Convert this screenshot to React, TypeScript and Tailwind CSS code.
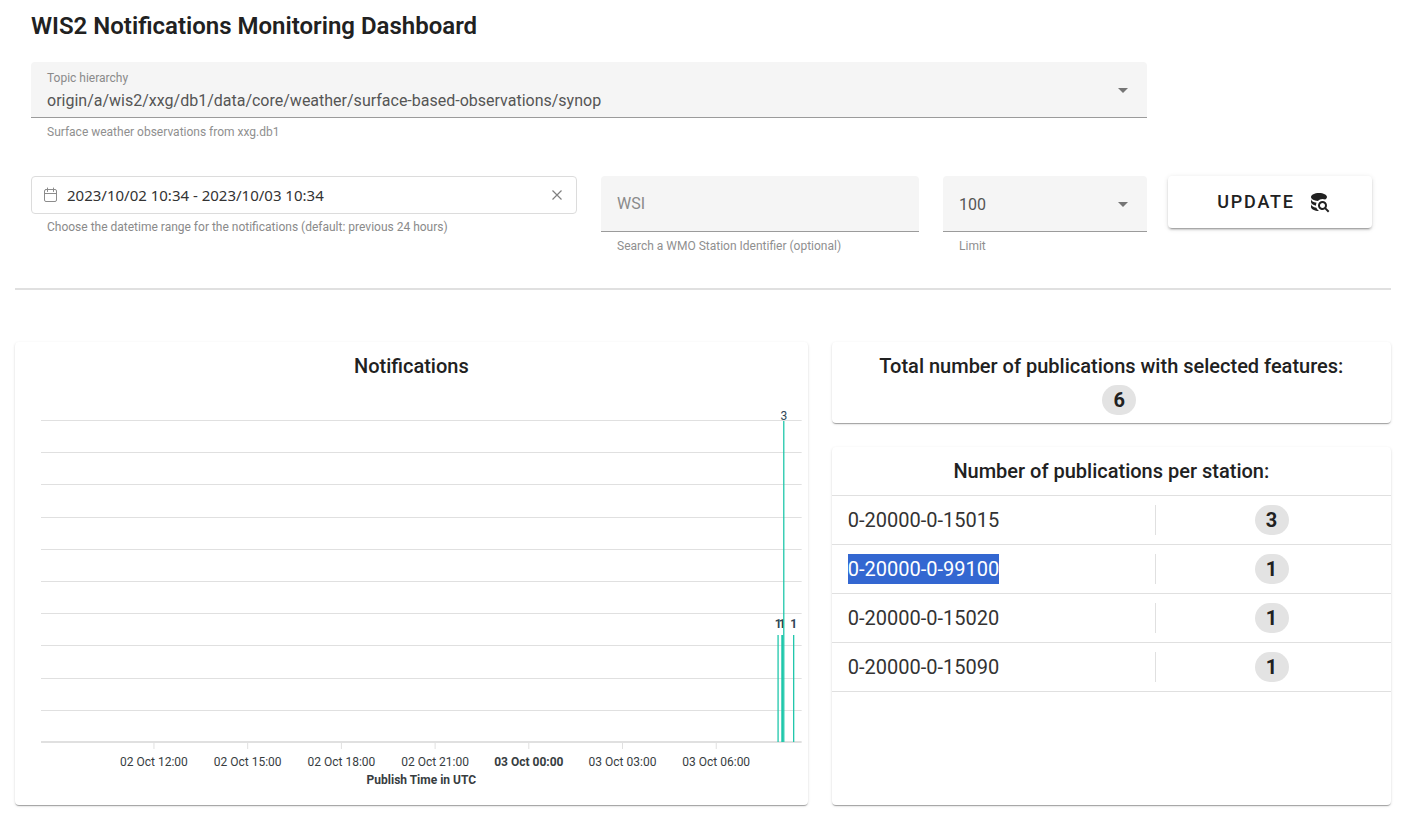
import type { ReactNode } from 'react';

const HINT = 'px-4 pt-1 text-xs leading-5 text-[#8f8f8f]';
const CARD =
  'rounded bg-white shadow-[0_2px_1px_-1px_rgba(0,0,0,0.2),0_1px_1px_0_rgba(0,0,0,0.14),0_1px_3px_0_rgba(0,0,0,0.12)]';

const stations = [
  { id: '0-20000-0-15015', count: 3, selected: false },
  { id: '0-20000-0-99100', count: 1, selected: true },
  { id: '0-20000-0-15020', count: 1, selected: false },
  { id: '0-20000-0-15090', count: 1, selected: false },
];

const ticks = [
  { label: '02 Oct 12:00', bold: false },
  { label: '02 Oct 15:00', bold: false },
  { label: '02 Oct 18:00', bold: false },
  { label: '02 Oct 21:00', bold: false },
  { label: '03 Oct 00:00', bold: true },
  { label: '03 Oct 03:00', bold: false },
  { label: '03 Oct 06:00', bold: false },
];

/* Horizontal positions are percentages of the plot width. */
const FIRST_TICK = 14.85;
const TICK_STEP = 12.32;
const bars = [
  { at: 96.9, value: 1, width: 1.3 },
  { at: 97.45, value: 1, width: 2 },
  { at: 97.65, value: 3, width: 1.3 },
  { at: 98.95, value: 1, width: 1.3 },
];

const BASE = 332;
const UNIT = 107;

function Caret() {
  return (
    <svg
      viewBox="0 0 24 24"
      className="pointer-events-none col-start-1 row-start-1 mr-3 size-6 self-center justify-self-end fill-[#757575]"
      aria-hidden="true"
    >
      <path d="M7,10L12,15L17,10H7Z" />
    </svg>
  );
}

function Badge({ children }: { children: ReactNode }) {
  return (
    <span className="inline-block min-w-[34px] rounded-full bg-[#e3e3e3] px-[11px] text-center text-xl leading-[30px] font-bold">
      {children}
    </span>
  );
}

function Chart() {
  return (
    <div className="pr-[6px] pl-[26px]">
      <svg className="block h-[385px] w-full overflow-visible text-xs" role="img" aria-label="Notifications over time">
        {Array.from({ length: 10 }, (_, i) => {
          const y = Math.round(10 + i * 32.2) + 0.5;
          return <line key={i} x1="0" x2="100%" y1={y} y2={y} stroke="#e0e0e0" />;
        })}
        <line x1="0" x2="100%" y1={BASE} y2={BASE} stroke="#e0e0e0" strokeWidth="2" />
        {ticks.map((t, i) => {
          const x = `${FIRST_TICK + i * TICK_STEP}%`;
          return (
            <g key={t.label}>
              <line x1={x} x2={x} y1={BASE} y2={BASE + 7} stroke="#e0e0e0" />
              <text x={x} y={BASE + 24} textAnchor="middle" fill="#373d3f" fontWeight={t.bold ? 700 : 400}>
                {t.label}
              </text>
            </g>
          );
        })}
        <text x="50%" y={BASE + 42} textAnchor="middle" fill="#373d3f" fontWeight="700">
          Publish Time in UTC
        </text>
        {bars.map((b) => (
          <g key={b.at}>
            <line
              x1={`${b.at}%`}
              x2={`${b.at}%`}
              y1={BASE - b.value * UNIT}
              y2={BASE}
              stroke="#1fc7ab"
              strokeWidth={b.width}
            />
            <text
              x={`${b.at}%`}
              y={BASE - b.value * UNIT - (b.value === 1 ? 7 : 1)}
              textAnchor="middle"
              fill="#304758"
              fontWeight={b.value === 1 ? 700 : 400}
            >
              {b.value}
            </text>
          </g>
        ))}
      </svg>
    </div>
  );
}

export default function App() {
  return (
    <main className="min-h-screen bg-white pr-[11px] pb-[10px] pl-[15px] font-[Roboto,sans-serif] text-[#212121]">
      <h1 className="pt-2 pl-4 text-2xl leading-9 font-semibold">WIS2 Notifications Monitoring Dashboard</h1>

      <form
        className="mt-[18px] grid grid-cols-[1116fr_204fr] gap-x-[21px] gap-y-[34px] pr-[19px] pl-4"
        onSubmit={(e) => e.preventDefault()}
      >
        <div className="col-start-1">
          <div className="grid h-14 rounded-t border-b border-[#9b9b9b] bg-[#f5f5f5]">
            <label htmlFor="topic" className="col-start-1 row-start-1 px-4 pt-2 text-xs leading-4 text-[#8a8a8a]">
              Topic hierarchy
            </label>
            <select
              id="topic"
              className="col-start-1 row-start-1 w-full appearance-none bg-transparent px-4 pt-[22px] text-base text-[#555]"
            >
              <option>origin/a/wis2/xxg/db1/data/core/weather/surface-based-observations/synop</option>
            </select>
            <Caret />
          </div>
          <p className={HINT}>Surface weather observations from xxg.db1</p>
        </div>

        <div className="col-start-1 grid grid-cols-[546fr_318fr_204fr] gap-6">
          <div>
            <div className="flex h-[38px] items-center rounded border border-[#dcdcdc] px-[11px]">
              <svg
                viewBox="0 0 16 16"
                className="mr-2 size-4 fill-none stroke-[#8c8c8c]"
                strokeLinecap="round"
                aria-hidden="true"
              >
                <rect x="1.5" y="2.5" width="12" height="12" rx="1.5" />
                <path d="M1.5 6.5H13.5M4.5 1V4.5M10.5 1V4.5" />
              </svg>
              <input
                id="range"
                className="min-w-0 flex-1 bg-transparent font-['Noto_Sans',sans-serif] text-[15px] text-[#333]"
                defaultValue="2023/10/02 10:34 - 2023/10/03 10:34"
              />
              <button type="button" aria-label="Clear" className="flex size-4 items-center justify-center">
                <svg viewBox="0 0 10 10" className="size-[10px] stroke-[#808080]" strokeWidth="1.2" aria-hidden="true">
                  <path d="M0.5 0.5L9.5 9.5M9.5 0.5L0.5 9.5" />
                </svg>
              </button>
            </div>
            <label htmlFor="range" className="block px-4 pt-[3px] text-xs leading-5 text-[#8a8a8a]">
              Choose the datetime range for the notifications (default: previous 24 hours)
            </label>
          </div>

          <div>
            <input
              id="wsi"
              placeholder="WSI"
              className="block h-14 w-full rounded-t border-b border-[#9b9b9b] bg-[#f5f5f5] px-4 text-base placeholder:text-[#8a8a8a]"
            />
            <label htmlFor="wsi" className={`block ${HINT}`}>
              Search a WMO Station Identifier (optional)
            </label>
          </div>

          <div>
            <div className="grid h-14 rounded-t border-b border-[#9b9b9b] bg-[#f5f5f5]">
              <select
                id="limit"
                className="col-start-1 row-start-1 w-full appearance-none bg-transparent px-4 pt-0.5 text-base text-[#555]"
              >
                <option>100</option>
              </select>
              <Caret />
            </div>
            <label htmlFor="limit" className={`block ${HINT}`}>
              Limit
            </label>
          </div>
        </div>

        <button
          type="submit"
          className="col-start-2 flex h-[52px] items-center justify-center gap-3 rounded bg-white pl-2 text-lg font-medium tracking-widest shadow-[0_3px_1px_-2px_rgba(0,0,0,0.2),0_2px_2px_0_rgba(0,0,0,0.14),0_1px_5px_0_rgba(0,0,0,0.12)]"
        >
          UPDATE
          <svg viewBox="0 0 24 24" className="size-6 fill-[#212121]" aria-hidden="true">
            <path d="M18.68,12.32C16.92,10.56 14.07,10.57 12.32,12.33C10.56,14.09 10.56,16.94 12.32,18.69C13.81,20.17 16.11,20.43 17.89,19.32L21,22.39L22.39,21L19.3,17.89C20.43,16.12 20.17,13.8 18.68,12.32M17.27,17.27C16.29,18.25 14.71,18.24 13.73,17.27C12.76,16.29 12.76,14.71 13.74,13.73C14.71,12.76 16.29,12.76 17.27,13.73C18.24,14.71 18.24,16.29 17.27,17.27M10.9,20.1C10.25,19.44 9.74,18.65 9.42,17.78C6.27,17.25 4,15.76 4,14V17C4,19.21 7.58,21 12,21V21C11.6,20.74 11.23,20.44 10.9,20.1M4,9V12C4,13.68 6.07,15.12 9,15.7C9,15.63 9,15.57 9,15.5C9,14.57 9.2,13.65 9.58,12.81C6.34,12.3 4,10.79 4,9M12,3C7.58,3 4,4.79 4,7C4,9 7,10.68 10.85,11H10.9C12.1,9.74 13.76,9 15.5,9C16.41,9 17.31,9.19 18.14,9.56C19.17,9.09 19.87,8.12 20,7C20,4.79 16.42,3 12,3Z" />
          </svg>
        </button>
      </form>

      <hr className="mt-8 border-t-2 border-[#e0e0e0]" />

      <div className="mt-[52px] grid grid-cols-12 gap-6">
        <section className={`col-span-7 pb-[10px] ${CARD}`}>
          <h2 className="pt-2 pb-7 text-center text-xl leading-8 font-medium">Notifications</h2>
          <Chart />
        </section>

        <div className="col-span-5 flex flex-col gap-6">
          <section className={`pt-2 pb-2 text-center ${CARD}`}>
            <h2 className="text-xl leading-8 font-medium">Total number of publications with selected features:</h2>
            <p className="flex justify-center pt-[3px] pl-4">
              <Badge>6</Badge>
            </p>
          </section>

          <section className={`flex-1 ${CARD}`}>
            <h2 className="py-2 text-center text-xl leading-8 font-medium">Number of publications per station:</h2>
            <table className="w-full table-fixed border-collapse border-y border-[#e0e0e0] text-xl">
              <tbody>
                {stations.map((s) => (
                  <tr key={s.id} className="h-[49px] border-b border-[#e0e0e0]">
                    <td className="w-[58%] p-0">
                      <div className="border-r border-[#e0e0e0] pl-4 leading-[30px] text-[#333]">
                        <span className={s.selected ? 'inline-block bg-[#3367d1] text-white' : ''}>{s.id}</span>
                      </div>
                    </td>
                    <td className="p-0 pr-1">
                      <div className="flex justify-center">
                        <Badge>{s.count}</Badge>
                      </div>
                    </td>
                  </tr>
                ))}
              </tbody>
            </table>
          </section>
        </div>
      </div>
    </main>
  );
}
